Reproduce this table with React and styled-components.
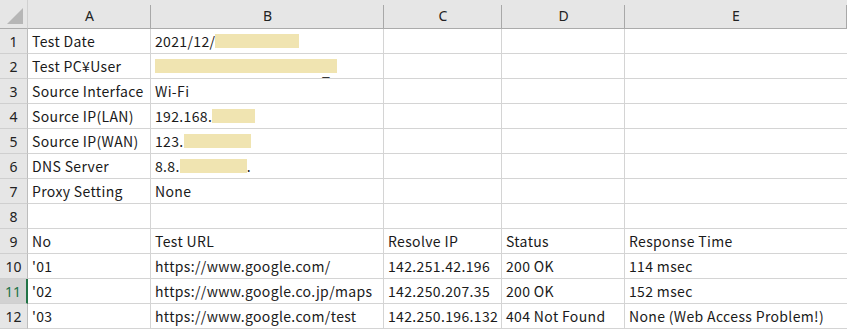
import { Fragment } from 'react';
import styled, { createGlobalStyle, css } from 'styled-components';

const GlobalStyle = createGlobalStyle`
  html, body {
    margin: 0;
    padding: 0;
    background: #ffffff;
  }
  body {
    font-family: "Noto Sans CJK JP", "Noto Sans", sans-serif;
  }
`;

const COLS = ['A', 'B', 'C', 'D', 'E'];

const Sheet = styled.div`
  display: grid;
  grid-template-columns: 28px 123px 233px 118px 123px 222px;
  grid-template-rows: 29px repeat(12, 25px);
  width: 847px;
  font-size: 14px;
  letter-spacing: 0.35px;
  color: #1a1a1a;
`;

const Corner = styled.div`
  position: relative;
  background: #e6e6e6;
  border-bottom: 1px solid #ababab;
  border-right: 1px solid #d0d0d0;
  box-sizing: border-box;
  &::after {
    content: '';
    position: absolute;
    right: 4px;
    bottom: 4px;
    width: 0;
    height: 0;
    border-left: 16px solid transparent;
    border-bottom: 16px solid #b6b6b6;
  }
`;

const ColHead = styled.div`
  position: relative;
  background: #e6e6e6;
  border-bottom: 1px solid #ababab;
  box-sizing: border-box;
  display: flex;
  align-items: center;
  justify-content: center;
  padding-top: 3px;
  font-family: "Noto Sans", sans-serif;
  font-size: 14px;
  letter-spacing: 0;
  color: #222;
  &::after {
    content: '';
    position: absolute;
    right: 0;
    top: 5px;
    bottom: 0;
    width: 1px;
    background: #a8a8a8;
  }
`;

const RowHead = styled.div`
  background: ${p => (p.$active ? '#d2d2d2' : '#e6e6e6')};
  color: ${p => (p.$active ? '#217346' : '#222')};
  border-bottom: 1px solid #cfcfcf;
  border-right: ${p => (p.$active ? '2px solid #217346' : '1px solid #bdbdbd')};
  box-sizing: border-box;
  display: flex;
  align-items: center;
  justify-content: center;
  padding-top: 1px;
  font-family: "Noto Sans", sans-serif;
  font-size: 14px;
  letter-spacing: 0;
`;

const Cell = styled.div`
  border-right: 1px solid #d4d4d4;
  border-bottom: 1px solid #d4d4d4;
  box-sizing: border-box;
  display: flex;
  align-items: center;
  padding: 0 0 0 4px;
  white-space: nowrap;
  overflow: visible;
  ${p => p.$last && css`border-right: none;`}
`;

const Redact = styled.span`
  display: inline-block;
  width: ${p => p.$w}px;
  height: 14px;
  background: #f0e4b1;
  vertical-align: middle;
`;

const Tail = styled.span`
  position: relative;
  top: ${p => p.$top || 0}px;
  margin-left: ${p => p.$ml || 0}px;
`;

const rows = [
  ['Test Date', <>2021/12/<Redact $w={84} /></>],
  ['Test PC¥User', <><Redact $w={182} /><Tail $top={4} $ml={-15}>_</Tail></>],
  ['Source Interface', 'Wi-Fi'],
  ['Source IP(LAN)', <>192.168.<Redact $w={43} /></>],
  ['Source IP(WAN)', <>123.<Redact $w={67} /></>],
  ['DNS Server', <>8.8.<Redact $w={67} /><Tail>.</Tail></>],
  ['Proxy Setting', 'None'],
  [],
  ['No', 'Test URL', 'Resolve IP', 'Status', 'Response Time'],
  ["'01", 'https://www.google.com/', '142.251.42.196', '200 OK', '114 msec'],
  ["'02", 'https://www.google.co.jp/maps', '142.250.207.35', '200 OK', '152 msec'],
  ["'03", 'https://www.google.com/test', '142.250.196.132', '404 Not Found', 'None (Web Access Problem!)'],
];

function App() {
  return (
    <>
      <GlobalStyle />
      <Sheet>
        <Corner />
        {COLS.map(c => (
          <ColHead key={c}>{c}</ColHead>
        ))}
        {rows.map((row, i) => (
          <Fragment key={i}>
            <RowHead $active={i === 10}>{i + 1}</RowHead>
            {COLS.map((c, j) => (
              <Cell key={c} $last={j === 4}>{row[j]}</Cell>
            ))}
          </Fragment>
        ))}
      </Sheet>
    </>
  );
}

export default App;
